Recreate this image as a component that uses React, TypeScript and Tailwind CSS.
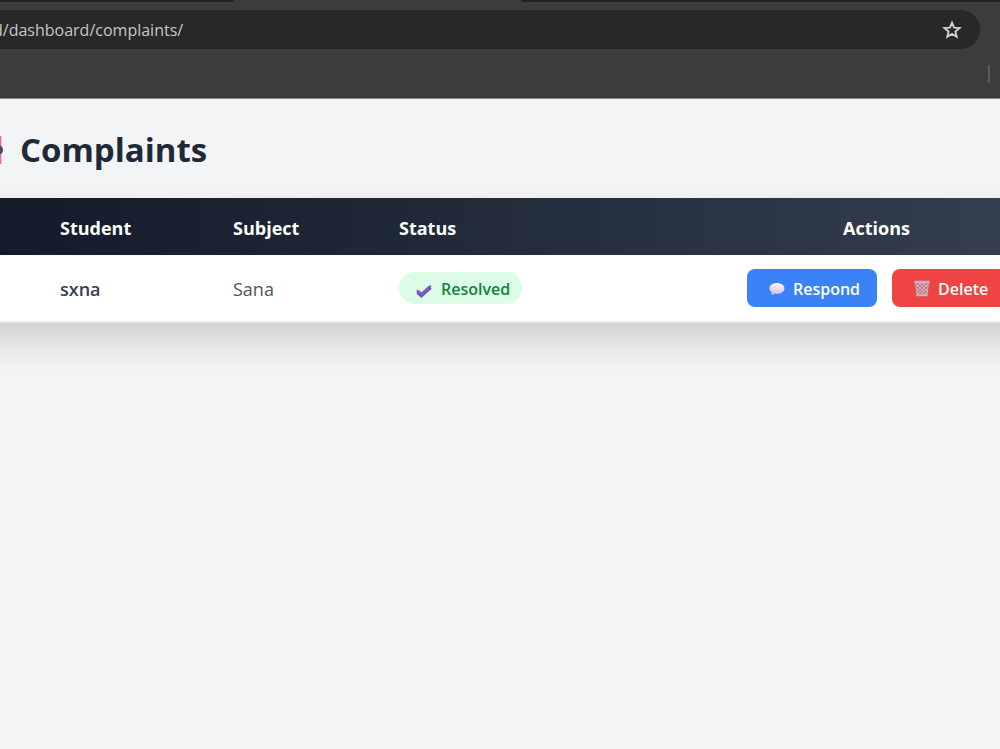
function CheckMark() {
  return (
    <svg viewBox="0 0 18 16" className="mt-1 h-4 w-[18px] shrink-0" aria-hidden="true">
      <path d="M2.800 9 6.300 12.300 15.300 4.200" fill="none" stroke="#6a55a3" strokeWidth="4" strokeLinejoin="miter" strokeLinecap="butt" />
      <path d="M2.800 8.200 6.300 11.600 15 3.600" fill="none" stroke="#8259cc" strokeWidth="2.600" strokeLinejoin="round" strokeLinecap="round" />
    </svg>
  );
}

function Bubble() {
  return (
    <svg viewBox="0 0 16 14" className="h-[14px] w-4 shrink-0" aria-hidden="true">
      <defs>
        <linearGradient id="bubble" x1="0" y1="0" x2="0" y2="1">
          <stop offset="0" stopColor="#fbf5fb" />
          <stop offset="1" stopColor="#cfc0e0" />
        </linearGradient>
      </defs>
      <path d="M8 1C3.600 1 .5 3.300.5 6.500c0 1.700 1 3.200 2.500 4.200-.1.900-.6 1.500-1.100 2 1.700.1 3.100-.4 4.100-1.100.7.100 1.300.2 2 .2 4.300 0 7.500-2.200 7.500-5.300S12.300 1 8 1Z" fill="url(#bubble)" />
    </svg>
  );
}

function Bin() {
  return (
    <svg viewBox="0 0 16 17" className="h-[17px] w-4 shrink-0" aria-hidden="true">
      <path d="M1.200 3h13.600L13.200 16H2.800Z" fill="#df5f6b" />
      <path
        d="m2 4 11 11M5 3l8.500 8.500M9 3l5 5M2.500 8l8 8M3 12l4 4M14 4 3 15M11 3l-8.500 8.500M7 3 2 8M13.500 8l-8 8M13 12l-4 4"
        fill="none"
        stroke="#cdc6d2"
        strokeWidth=".9"
      />
      <path d="M1.700 3 3 15.500h10L14.300 3" fill="none" stroke="#b4afbb" strokeWidth="1.200" />
      <rect x=".3" y=".8" width="15.400" height="2.600" rx=".6" fill="#bdb7c3" />
      <rect x="2.600" y="14.300" width="10.800" height="2" rx=".5" fill="#bdb7c3" />
    </svg>
  );
}

function TitleMark() {
  return (
    <svg viewBox="0 0 4 30" className="h-[30px] w-1 shrink-0" aria-hidden="true">
      <rect width="1.300" height="28" y="1" fill="#f0649a" />
      <path d="M0 10.500c2 .6 3 2.400 3 4.500s-1 3.900-3 4.500Z" fill="#4d4966" />
    </svg>
  );
}

function BrowserBar() {
  return (
    <header className="border-b border-[#8b8b8d] bg-[#3c3c3c]">
      <div className="flex h-[10px] items-start justify-between">
        <div className="h-[2px] w-[234px] rounded-br-sm bg-[#202020]" />
        <div className="h-[2px] w-[479px] rounded-bl-sm bg-[#202020]" />
      </div>
      <div className="mr-5 flex h-[39px] items-center justify-between rounded-r-full bg-[#282828] pr-[18px]">
        <div className="flex min-w-0 flex-1 overflow-hidden">
          <input
            aria-label="Address"
            readOnly
            value="d/dashboard/complaints/"
            className="-ml-[7px] w-full bg-transparent text-base text-[#c7c7c7] outline-none"
          />
        </div>
        <button type="button" aria-label="Bookmark this page" className="text-[#d0d0d0]">
          <svg viewBox="0 0 20 20" className="size-5" aria-hidden="true">
            <path
              d="m10 2.600 2.100 5 5.400.4-4.100 3.500 1.300 5.300-4.700-2.900-4.700 2.900 1.300-5.300L2.500 8l5.400-.4Z"
              fill="none"
              stroke="currentColor"
              strokeWidth="1.900"
            />
          </svg>
        </button>
      </div>
      <div className="flex h-[49px] items-center justify-end pr-[10px]">
        <div className="h-[18px] w-[2px] bg-[#5c5c5c]" />
      </div>
    </header>
  );
}

export default function App() {
  return (
    <div className="min-h-screen overflow-x-hidden bg-[#f3f4f6] font-['Open_Sans','Noto_Sans',sans-serif]">
      <BrowserBar />
      <main className="pt-[26px]">
        <h1 className="flex h-[50px] items-center gap-4 text-[33px] font-bold text-[#1f2937]">
          <TitleMark />
          Complaints
        </h1>
        <div className="mt-[23px] -mr-20 -ml-20 bg-white shadow-[0_18px_40px_-6px_rgba(0,0,0,0.2)]">
          <table className="w-full table-fixed border-collapse text-left text-lg">
            <colgroup>
              <col className="w-[116px]" />
              <col className="w-[173px]" />
              <col className="w-[166px]" />
              <col />
              <col className="w-[307px]" />
              <col className="w-[50px]" />
            </colgroup>
            <thead className="bg-linear-to-r from-[#111827] to-[#374151] text-white">
              <tr className="h-[57px]">
                <td />
                <th className="px-6 pt-0.5 font-bold">Student</th>
                <th className="px-6 pt-0.5 font-bold">Subject</th>
                <th className="px-6 pt-0.5 font-bold">Status</th>
                <th className="px-6 pt-0.5 text-center font-bold">Actions</th>
                <td />
              </tr>
            </thead>
            <tbody>
              <tr className="h-[67px] border-b-2 border-[#e8e9eb]">
                <td />
                <td className="px-6 pt-0.5 font-semibold text-[#374151]">sxna</td>
                <td className="px-6 pt-0.5 text-[#4b5563]">Sana</td>
                <td className="px-6">
                  <span className="inline-flex h-8 items-center gap-2 rounded-full bg-[#dcfce7] pt-px pr-3 pl-4 align-middle text-base font-semibold text-[#15803d]">
                    <CheckMark />
                    Resolved
                  </span>
                </td>
                <td className="px-6">
                  <div className="flex gap-[15px]">
                    <button type="button" className="flex h-[38px] w-[130px] shrink-0 items-center gap-2 rounded-lg bg-[#3b82f6] pt-px pl-[22px] text-base font-semibold text-white">
                      <Bubble />
                      Respond
                    </button>
                    <button type="button" className="flex h-[38px] w-[114px] shrink-0 items-center gap-2 rounded-lg bg-[#ef4444] pt-px pl-[22px] text-base font-semibold text-white">
                      <Bin />
                      Delete
                    </button>
                  </div>
                </td>
                <td />
              </tr>
            </tbody>
          </table>
        </div>
      </main>
    </div>
  );
}
